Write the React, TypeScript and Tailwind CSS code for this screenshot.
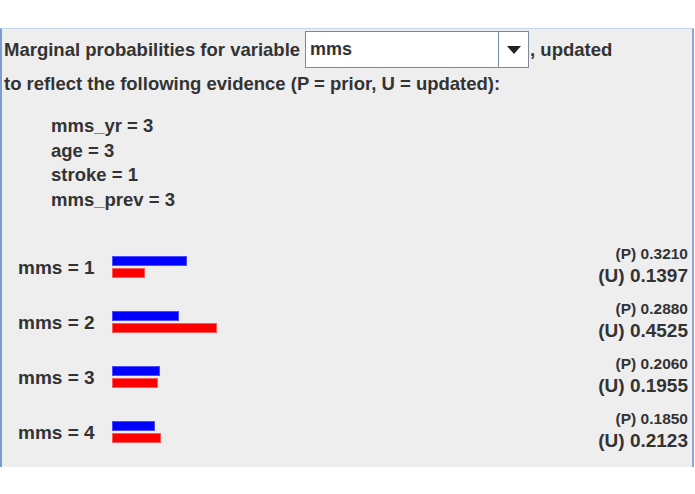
const evidence = [
  { name: "mms_yr", value: "3" },
  { name: "age", value: "3" },
  { name: "stroke", value: "1" },
  { name: "mms_prev", value: "3" },
]

const states = [
  { label: "mms = 1", prior: 0.321, updated: 0.1397 },
  { label: "mms = 2", prior: 0.288, updated: 0.4525 },
  { label: "mms = 3", prior: 0.206, updated: 0.1955 },
  { label: "mms = 4", prior: 0.185, updated: 0.2123 },
]

// pixels per unit of probability
const SCALE = 233

function Bar({ p, color }: { p: number; color: "blue" | "red" }) {
  return (
    <div
      className={
        color === "blue"
          ? "h-[10px] bg-[#0000ff] border border-[#4a4aff]"
          : "h-[10px] bg-[#ff0000] border border-[#ff5a5a]"
      }
      style={{ width: Math.round(p * SCALE) }}
    />
  )
}

function VariableCombo() {
  return (
    <div className="ml-[5px] flex h-[37px] w-[224px] border border-[#7a8a9c] bg-white">
      <span className="flex flex-1 items-center pl-[4px] text-[18px]">mms</span>
      <div className="flex w-[30px] items-center justify-center border-l border-[#7a8a9c]">
        <svg width="14" height="8" viewBox="0 0 14 8">
          <polygon points="0,0 14,0 7,8" fill="#222" />
        </svg>
      </div>
    </div>
  )
}

export default function App() {
  return (
    <div className="h-[494px] w-[695px] bg-white font-['Liberation_Sans',Arial,sans-serif] font-bold text-[#333]">
      <div className="h-[28px]" />
      <div className="h-[439px] w-[694px] border-t border-l-2 border-r-2 border-t-[#c4d6ea] border-l-[#7d9dcc] border-r-[#8aa8d2] bg-[#eeeeee]">
        <div className="mt-[2px] flex h-[37px] items-center pl-[2px] text-[18.5px]">
          <span>Marginal probabilities for variable</span>
          <VariableCombo />
          <span className="ml-[1px]">, updated</span>
        </div>
        <div className="mt-[2px] pl-[2px] text-[18.5px] leading-[28px]">
          to reflect the following evidence (P = prior, U = updated):
        </div>

        <div className="mt-[16px] pl-[49px] text-[18.5px] leading-[24.7px]">
          {evidence.map((e) => (
            <div key={e.name}>
              {e.name} = {e.value}
            </div>
          ))}
        </div>

        <div className="mt-[28px] pr-[4px]">
          {states.map((s) => (
            <div key={s.label} className="flex h-[55px] items-center">
              <span className="w-[110px] pl-[16px] text-[19px]">{s.label}</span>
              <div className="mt-[-2px] flex flex-col gap-[2px]">
                <Bar p={s.prior} color="blue" />
                <Bar p={s.updated} color="red" />
              </div>
              <div className="ml-auto mt-[-4px] flex flex-col items-end">
                <span className="text-[15.5px] leading-[20px]">
                  (P) {s.prior.toFixed(4)}
                </span>
                <span className="text-[19px] leading-[24px]">
                  (U) {s.updated.toFixed(4)}
                </span>
              </div>
            </div>
          ))}
        </div>
      </div>
    </div>
  )
}
